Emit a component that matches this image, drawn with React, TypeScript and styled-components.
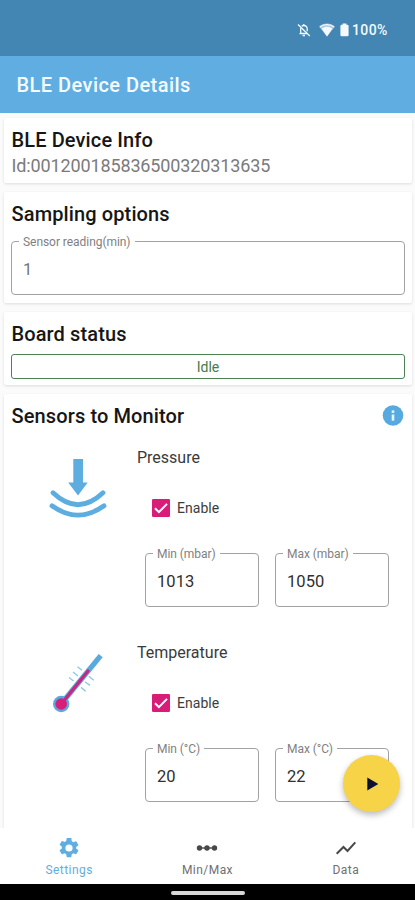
import React from 'react';
import styled, { createGlobalStyle } from 'styled-components';

const GlobalStyle = createGlobalStyle`
  *, *::before, *::after { box-sizing: border-box; }
  body { margin: 0; background: #fbfbfb; font-family: Roboto, "Noto Sans", sans-serif; }
`;

const Screen = styled.div`
  width: 415px;
  height: 900px;
  display: flex;
  flex-direction: column;
  position: relative;
  overflow: hidden;
`;

const StatusBar = styled.div`
  height: 56px;
  flex: none;
  display: flex;
  align-items: center;
  justify-content: flex-end;
  padding: 4px 27px 0 0;
  background: #4385b3;
  color: #f4fafe;
`;

const StatusIcons = styled.div`
  display: flex;
  align-items: center;
  svg:nth-child(2) { margin-left: 8px; }
  svg:nth-child(3) { margin-left: 5px; }
`;

const BatteryText = styled.span`
  font-size: 14px;
  font-weight: 500;
  letter-spacing: 0.4px;
  width: 36px;
  margin-left: 3px;
  white-space: nowrap;
`;

const AppBar = styled.header`
  height: 57px;
  flex: none;
  display: flex;
  align-items: center;
  padding: 1px 16.5px 0;
  background: #60aee1;
  color: #f5fbff;
  font-size: 20px;
  font-weight: 500;
  letter-spacing: 0.45px;
`;

const Content = styled.main`
  height: 715px;
  flex: none;
  overflow: hidden;
  display: flex;
  flex-direction: column;
  gap: 9px;
  padding: 5px 3px 0 4px;
`;

const Card = styled.section<{ $height: number }>`
  height: ${(p) => p.$height}px;
  flex: none;
  padding: 9px 7px 0;
  background: #fff;
  border-radius: 2px;
  box-shadow: 0 1px 3px rgba(0, 0, 0, 0.12);
`;

const CardHeader = styled.div`
  display: flex;
  align-items: center;
  justify-content: space-between;
  height: 26px;
  padding-right: 1.5px;
`;

const CardTitle = styled.h2`
  margin: 0 0 0 0.5px;
  font-size: 20px;
  line-height: 26px;
  font-weight: 500;
  letter-spacing: 0.12px;
  color: #161616;
`;

const DeviceId = styled.p`
  margin: 0 0 0 0.5px;
  font-size: 18px;
  line-height: 25px;
  letter-spacing: -0.13px;
  color: #7b7b7b;
`;

const SamplingRow = styled.div`
  display: flex;
  margin-top: 6px;
`;

const Outlined = styled.fieldset<{ $muted?: boolean }>`
  flex: 1;
  min-width: 0;
  height: 62px;
  margin: 0;
  padding: 0 11px;
  border: 1px solid #a2a2a2;
  border-radius: 4px;
  font-size: 16.5px;
  letter-spacing: 0.1px;
  color: ${(p) => (p.$muted ? '#757575' : '#303030')};
`;

const Legend = styled.legend`
  margin-left: -4px;
  padding: 2px 4px 0;
  font-size: 12px;
  line-height: 14px;
  letter-spacing: -0.05px;
  color: #7f7f7f;
`;

const Value = styled.div`
  line-height: 20px;
  padding-top: 11px;
`;

const Status = styled.div`
  height: 25px;
  margin-top: 7px;
  border: 1px solid #4d8052;
  border-radius: 3px;
  color: #467b4a;
  font-size: 14px;
  line-height: 24px;
  text-align: center;
`;

const SensorList = styled.div`
  padding-top: 14px;
`;

const Sensor = styled.div`
  display: grid;
  grid-template-columns: 126px 1fr;
  height: 195px;
`;

const SensorIcon = styled.div`
  padding: 15px 0 0 32px;
`;

const SensorName = styled.div`
  height: 30px;
  line-height: 30px;
  font-size: 16px;
  color: #3a3a3a;
`;

const EnableRow = styled.label`
  display: flex;
  align-items: center;
  gap: 7px;
  height: 20px;
  margin: 24.5px 0 0 15px;
  font-size: 14px;
  letter-spacing: 0.05px;
  color: #3d3d3d;
`;

const FieldRow = styled.div`
  display: flex;
  gap: 16px;
  margin-top: 27.5px;
  padding: 0 16px 0 8px;
`;

const Fab = styled.button`
  position: absolute;
  left: 343px;
  top: 755px;
  width: 57px;
  height: 57px;
  padding: 0 0 0 1px;
  border: 0;
  border-radius: 50%;
  background: #f7d347;
  box-shadow: 0 3px 6px rgba(0, 0, 0, 0.27);
  display: grid;
  place-items: center;
`;

const BottomNav = styled.nav`
  height: 56px;
  flex: none;
  display: grid;
  grid-template-columns: repeat(3, 1fr);
  background: #fff;
`;

const NavItem = styled.div<{ $active?: boolean }>`
  display: flex;
  flex-direction: column;
  align-items: center;
  padding-top: 8px;
  color: ${(p) => (p.$active ? '#60aee1' : '#707070')};
  font-size: 12px;
  letter-spacing: 0.45px;
  line-height: 20px;
`;

const SystemBar = styled.div`
  height: 16px;
  flex: none;
  background: #000;
  display: flex;
  justify-content: center;
  padding-top: 7px;
`;

const HomeHandle = styled.div`
  width: 74px;
  height: 4px;
  border-radius: 2px;
  background: #d8d8d8;
`;

const BellOff = () => (
  <svg width="14" height="14" viewBox="0 0 14 14" fill="none" stroke="currentColor" strokeWidth="1.3">
    <path d="M1 1.5 L12.8 13" />
    <path d="M4.7 3.2 C5.2 2.7 5.9 2.5 6.8 2.5 C9 2.5 10.2 4.1 10.2 6 V8.2 M3.7 5 V10.3 H10 M2.5 10.7 H10" />
    <path d="M6.8 0.9 V2.5 M5.6 12.5 H8" />
  </svg>
);

const Wifi = () => (
  <svg width="16" height="14" viewBox="0 0 16 14" fill="currentColor">
    <path d="M8 0.6 C4.9 0.6 2.2 1.8 0.2 3.7 L8 13.4 L15.8 3.7 C13.8 1.8 11.1 0.6 8 0.6Z" opacity=".55" />
    <path d="M2.6 5.4 C5.6 3.3 10.4 3.3 13.4 5.4 L8 13.4Z" />
    <path d="M0.9 4.1 C4.8 .7 11.2 .7 15.1 4.1" fill="none" stroke="currentColor" strokeWidth="1.2" />
  </svg>
);

const Battery = () => (
  <svg width="9" height="14" viewBox="0 0 9 14" fill="currentColor">
    <path d="M2.6 .5 H6.4 V1.8 H7.3 Q8.6 1.8 8.6 3.1 V12 Q8.6 13.3 7.3 13.3 H1.7 Q.4 13.3 .4 12 V3.1 Q.4 1.8 1.7 1.8 H2.6Z" />
  </svg>
);

const Info = () => (
  <svg width="22" height="22" viewBox="0 0 22 22">
    <circle cx="11" cy="10.5" r="10.3" fill="#57aadf" />
    <rect x="9.7" y="5.4" width="2.6" height="2.5" fill="#e7f5ff" />
    <rect x="9.7" y="9.5" width="2.6" height="6.2" fill="#e7f5ff" />
  </svg>
);

const Pressure = () => (
  <svg width="70" height="62" viewBox="43 458 70 62" fill="none">
    <path d="M73.3 459 H83 V482.5 H87.7 L78 495.6 L68.2 482.5 H73.3Z" fill="#5dade0" />
    <path d="M53 492.8 Q78 516.5 103 492.8 M52 505.8 Q78 524.5 104 505.8" stroke="#5dade0" strokeWidth="4.8" strokeLinecap="round" />
  </svg>
);

const Thermometer = () => (
  <svg width="70" height="68" viewBox="43 653 70 68" fill="none">
    <path d="M61.5 703.5 L100.7 655.7" stroke="#58aade" strokeWidth="5.2" />
    <circle cx="61.2" cy="704" r="8.2" fill="#58aade" />
    <path d="M62 703 L88 671" stroke="#c72782" strokeWidth="3.2" strokeLinecap="round" />
    <circle cx="61.2" cy="704" r="5.8" fill="#d8207b" />
    <path d="M77.5 666.8 L82 670.3 M73 672 L78 676 M69 677.5 L73.5 681 M88.8 676.3 L93.7 680.2 M85 681.8 L90 685.4 M81 687.4 L85.7 691.2" stroke="#8cc9e5" strokeWidth="1.4" />
  </svg>
);

const Checkbox = () => (
  <svg width="18" height="18" viewBox="0 0 18 18">
    <rect width="18" height="18" rx="1.3" fill="#d91c78" />
    <path d="M3 9.3 L6.9 13.1 L15 4.9" fill="none" stroke="#fff" strokeWidth="2" />
  </svg>
);

const Gear = () => (
  <svg width="24" height="24" viewBox="0 0 24 24" fill="currentColor">
    <path d="M19.14 12.94c.04-.3.06-.61.06-.94s-.02-.64-.07-.94l2.03-1.58a.49.49 0 0 0 .12-.61l-1.92-3.32a.49.49 0 0 0-.59-.22l-2.39.96a7 7 0 0 0-1.62-.94l-.36-2.54A.48.48 0 0 0 13.92 2h-3.84a.48.48 0 0 0-.47.41l-.36 2.54a7 7 0 0 0-1.62.94l-2.39-.96a.49.49 0 0 0-.59.22L2.73 8.47a.48.48 0 0 0 .12.61l2.03 1.58c-.05.3-.08.63-.08.94s.02.64.07.94l-2.03 1.58a.49.49 0 0 0-.12.61l1.92 3.32c.12.22.37.29.59.22l2.39-.96c.5.38 1.03.7 1.62.94l.36 2.54c.05.24.24.41.48.41h3.84c.24 0 .44-.17.47-.41l.36-2.54a7 7 0 0 0 1.62-.94l2.39.96c.22.08.47 0 .59-.22l1.92-3.32a.48.48 0 0 0-.12-.61l-2.01-1.58ZM12 15.6a3.6 3.6 0 1 1 0-7.2 3.6 3.6 0 0 1 0 7.2Z" />
  </svg>
);

const Dots = () => (
  <svg width="24" height="24" viewBox="0 0 24 24" fill="#484848">
    <path d="M4 11.3 H20 V12.7 H4Z" />
    <circle cx="4.5" cy="12" r="2.7" />
    <circle cx="12" cy="12" r="2.7" />
    <circle cx="19.5" cy="12" r="2.7" />
  </svg>
);

const Chart = () => (
  <svg width="24" height="24" viewBox="0 0 24 24" fill="none" stroke="#484848" strokeWidth="2">
    <path d="M2.7 17.8 L9.5 11 L13.5 15 L21.3 6.3" />
  </svg>
);

const Play = () => (
  <svg width="13" height="14" viewBox="0 0 13 14">
    <path d="M1.3 .5 L12.3 7 L1.3 13.5Z" fill="#0b1035" />
  </svg>
);

interface FieldProps {
  label: string;
  value: string;
  muted?: boolean;
}

const Field = ({ label, value, muted }: FieldProps) => (
  <Outlined $muted={muted}>
    <Legend>{label}</Legend>
    <Value>{value}</Value>
  </Outlined>
);

const sensors = [
  { name: 'Pressure', unit: 'mbar', min: '1013', max: '1050', icon: <Pressure /> },
  { name: 'Temperature', unit: '°C', min: '20', max: '22', icon: <Thermometer /> },
];

export default function App() {
  return (
    <Screen>
      <GlobalStyle />
      <StatusBar>
        <StatusIcons>
          <BellOff />
          <Wifi />
          <Battery />
        </StatusIcons>
        <BatteryText>100%</BatteryText>
      </StatusBar>
      <AppBar>BLE Device Details</AppBar>
      <Content>
        <Card $height={65}>
          <CardTitle>BLE Device Info</CardTitle>
          <DeviceId>Id:001200185836500320313635</DeviceId>
        </Card>
        <Card $height={111}>
          <CardTitle>Sampling options</CardTitle>
          <SamplingRow>
            <Field label="Sensor reading(min)" value="1" muted />
          </SamplingRow>
        </Card>
        <Card $height={73}>
          <CardTitle>Board status</CardTitle>
          <Status>Idle</Status>
        </Card>
        <Card $height={450}>
          <CardHeader>
            <CardTitle>Sensors to Monitor</CardTitle>
            <Info />
          </CardHeader>
          <SensorList>
            {sensors.map((s) => (
              <Sensor key={s.name}>
                <SensorIcon>{s.icon}</SensorIcon>
                <div>
                  <SensorName>{s.name}</SensorName>
                  <EnableRow>
                    <Checkbox />
                    Enable
                  </EnableRow>
                  <FieldRow>
                    <Field label={`Min (${s.unit})`} value={s.min} />
                    <Field label={`Max (${s.unit})`} value={s.max} />
                  </FieldRow>
                </div>
              </Sensor>
            ))}
          </SensorList>
        </Card>
      </Content>
      <BottomNav>
        <NavItem $active>
          <Gear />
          Settings
        </NavItem>
        <NavItem>
          <Dots />
          Min/Max
        </NavItem>
        <NavItem>
          <Chart />
          Data
        </NavItem>
      </BottomNav>
      <SystemBar>
        <HomeHandle />
      </SystemBar>
      <Fab aria-label="Start">
        <Play />
      </Fab>
    </Screen>
  );
}
